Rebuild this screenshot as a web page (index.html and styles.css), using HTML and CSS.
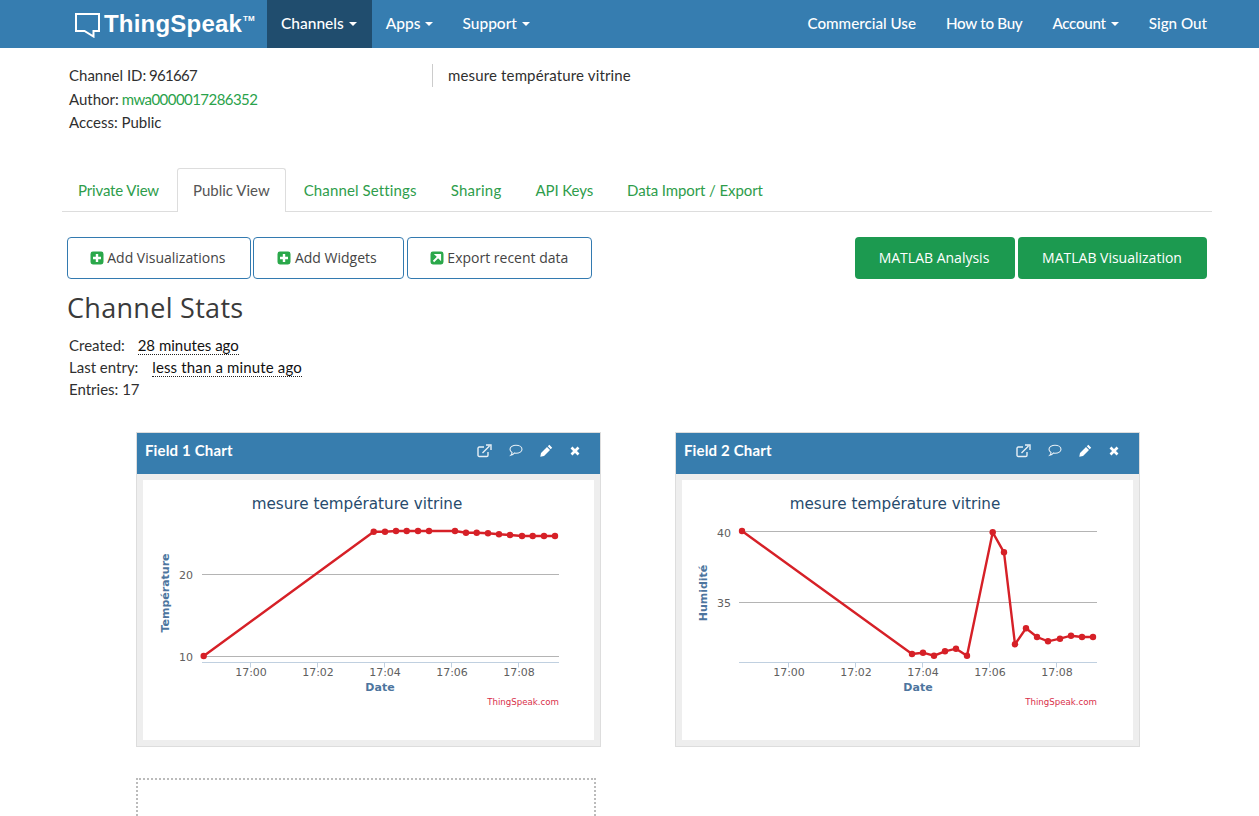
FILE: index.html
```html
<!DOCTYPE html>
<html lang="en">
<head>
<meta charset="utf-8">
<title>ThingSpeak channel</title>
<link rel="stylesheet" href="styles.css">
</head>
<body>
<nav class="navbar">
  <a class="brand">
    <svg class="brand-icon" width="26" height="26" viewBox="0 0 26 26"><path d="M1 2H24V19H18.500V24.500L9.500 19H1Z" fill="none" stroke="#fff" stroke-width="2"/></svg>
    <span class="brand-name">ThingSpeak</span><span class="brand-tm">TM</span>
  </a>
  <ul class="nav-left">
    <li class="nav-item active">Channels <i class="caret"></i></li>
    <li class="nav-item">Apps <i class="caret"></i></li>
    <li class="nav-item">Support <i class="caret"></i></li>
  </ul>
  <ul class="nav-right">
    <li class="nav-item">Commercial Use</li>
    <li class="nav-item tight">How to Buy</li>
    <li class="nav-item tight">Account <i class="caret"></i></li>
    <li class="nav-item">Sign Out</li>
  </ul>
</nav>

<main class="container">
  <section class="info">
    <div class="info-left">
      <div>Channel ID: <span class="num">961667</span></div>
      <div>Author: <a class="link">mwa0000017286352</a></div>
      <div>Access: Public</div>
    </div>
    <div class="info-desc">mesure température vitrine</div>
  </section>

  <ul class="tabs">
    <li class="tab tab-narrow">Private View</li>
    <li class="tab active">Public View</li>
    <li class="tab tab-wide">Channel Settings</li>
    <li class="tab tab-wider">Sharing</li>
    <li class="tab tab-slim">API Keys</li>
    <li class="tab tab-slim">Data Import / Export</li>
  </ul>

  <div class="toolbar">
    <div class="btn-group">
      <button class="btn btn-outline btn-vis"><svg class="ico" viewBox="0 0 14 14"><rect x=".5" width="13" height="13" y=".5" rx="2.400" fill="#2aa84a"/><path d="M7 3v8M3 7h8" stroke="#fff" stroke-width="2.400"/></svg> Add Visualizations</button>
      <button class="btn btn-outline btn-wid"><svg class="ico" viewBox="0 0 14 14"><rect x=".5" width="13" height="13" y=".5" rx="2.400" fill="#2aa84a"/><path d="M7 3v8M3 7h8" stroke="#fff" stroke-width="2.400"/></svg> Add Widgets</button>
      <button class="btn btn-outline btn-exp"><svg class="ico" viewBox="0 0 14 14"><rect x=".5" width="13" height="13" y=".5" rx="2.400" fill="#2aa84a"/><path d="M3.500 10.500L8 6M6 3.800H10.200V8Z" stroke="#fff" stroke-width="1.800" fill="#fff"/></svg> Export recent data</button>
    </div>
    <div class="btn-group">
      <button class="btn btn-green btn-ana">MATLAB Analysis</button>
      <button class="btn btn-green btn-viz">MATLAB Visualization</button>
    </div>
  </div>

  <h1 class="stats-title">Channel Stats</h1>
  <div class="stats">
    <div>Created: <abbr class="time first">28 minutes ago</abbr></div>
    <div>Last entry: <abbr class="time wide">less than a minute ago</abbr></div>
    <div>Entries: 17</div>
  </div>

  <section class="cards">
    <article class="card">
      <header class="card-head">
        <span class="card-title">Field 1 Chart</span>
        <span class="card-icons">
          <svg width="15" height="14" viewBox="0 0 15 14"><path d="M11 8v3.200a1.300 1.300 0 0 1-1.300 1.300H2.300A1.300 1.300 0 0 1 1 11.200V4.300A1.300 1.300 0 0 1 2.300 3H7M5.500 9L12.500 2M9 1h5v5" fill="none" stroke="#e8f0f6" stroke-width="1.400"/></svg>
          <svg width="14" height="13" viewBox="0 0 14 13"><path d="M7 1.200c3.300 0 6 1.700 6 4s-2.700 4-6 4c-.6 0-1.100 0-1.600-.2C4.500 10.200 3.300 11 1.800 11.300 2.700 10.400 3 9.500 3 8.400 1.800 7.700 1 6.500 1 5.200c0-2.300 2.700-4 6-4Z" fill="none" stroke="#e8f0f6" stroke-width="1.100"/></svg>
          <svg width="13" height="13" viewBox="0 0 13 13"><path d="M9.300.8l2.900 2.900-1.500 1.500-2.900-2.900ZM7 3l3 3-6 6-3.700.8.700-3.800Z" fill="#fff"/></svg>
          <svg width="10" height="10" viewBox="0 0 10 10"><path d="M1.500 1.500l7 7M8.500 1.500l-7 7" stroke="#fff" stroke-width="2.700"/></svg>
        </span>
      </header>
      <div class="card-body">
        <svg class="chart" width="451" height="260" viewBox="0 0 451 260">
          <text class="c-title" x="214" y="29" text-anchor="middle">mesure température vitrine</text>
          <path class="grid" d="M59 94.500H416M59 176.500H416"/>
          <path class="axis" d="M59 182.500H416M107.500 182.500v5M174.500 182.500v5M241.500 182.500v5M308.500 182.500v5M375.500 182.500v5"/>
          <text class="c-label" x="50" y="99" text-anchor="end">20</text>
          <text class="c-label" x="50" y="181" text-anchor="end">10</text>
          <text class="c-label" x="108" y="196" text-anchor="middle">17:00</text>
          <text class="c-label" x="175" y="196" text-anchor="middle">17:02</text>
          <text class="c-label" x="242" y="196" text-anchor="middle">17:04</text>
          <text class="c-label" x="309" y="196" text-anchor="middle">17:06</text>
          <text class="c-label" x="376" y="196" text-anchor="middle">17:08</text>
          <text class="c-axis" x="237" y="211" text-anchor="middle">Date</text>
          <text class="c-axis" transform="translate(26 113) rotate(-90)" text-anchor="middle">Température</text>
          <text class="c-credit" x="416" y="225" text-anchor="end">ThingSpeak.com</text>
          <polyline class="line" points="60.700,176 230.700,51.700 242,51.700 253,51 263.700,51 275,51 286,51 312,51 323,52.700 333.700,52.700 345,53.300 356,54.300 367,55 379,56 389.700,56 401,56 412,56"/>
          <g class="dots"><circle cx="60.700" cy="176" r="3.200"/><circle cx="230.700" cy="51.700" r="3.200"/><circle cx="242" cy="51.700" r="3.200"/><circle cx="253" cy="51" r="3.200"/><circle cx="263.700" cy="51" r="3.200"/><circle cx="275" cy="51" r="3.200"/><circle cx="286" cy="51" r="3.200"/><circle cx="312" cy="51" r="3.200"/><circle cx="323" cy="52.700" r="3.200"/><circle cx="333.700" cy="52.700" r="3.200"/><circle cx="345" cy="53.300" r="3.200"/><circle cx="356" cy="54.300" r="3.200"/><circle cx="367" cy="55" r="3.200"/><circle cx="379" cy="56" r="3.200"/><circle cx="389.700" cy="56" r="3.200"/><circle cx="401" cy="56" r="3.200"/><circle cx="412" cy="56" r="3.200"/></g>
        </svg>
      </div>
    </article>

    <article class="card">
      <header class="card-head">
        <span class="card-title">Field 2 Chart</span>
        <span class="card-icons">
          <svg width="15" height="14" viewBox="0 0 15 14"><path d="M11 8v3.200a1.300 1.300 0 0 1-1.300 1.300H2.300A1.300 1.300 0 0 1 1 11.200V4.300A1.300 1.300 0 0 1 2.300 3H7M5.500 9L12.500 2M9 1h5v5" fill="none" stroke="#e8f0f6" stroke-width="1.400"/></svg>
          <svg width="14" height="13" viewBox="0 0 14 13"><path d="M7 1.200c3.300 0 6 1.700 6 4s-2.700 4-6 4c-.6 0-1.100 0-1.600-.2C4.500 10.200 3.300 11 1.800 11.300 2.700 10.400 3 9.500 3 8.400 1.800 7.700 1 6.500 1 5.200c0-2.300 2.700-4 6-4Z" fill="none" stroke="#e8f0f6" stroke-width="1.100"/></svg>
          <svg width="13" height="13" viewBox="0 0 13 13"><path d="M9.300.8l2.900 2.900-1.500 1.500-2.900-2.900ZM7 3l3 3-6 6-3.700.8.700-3.800Z" fill="#fff"/></svg>
          <svg width="10" height="10" viewBox="0 0 10 10"><path d="M1.500 1.500l7 7M8.500 1.500l-7 7" stroke="#fff" stroke-width="2.700"/></svg>
        </span>
      </header>
      <div class="card-body">
        <svg class="chart" width="451" height="260" viewBox="0 0 451 260">
          <text class="c-title" x="213" y="29" text-anchor="middle">mesure température vitrine</text>
          <path class="grid" d="M57 51.500H415M57 122.500H415"/>
          <path class="axis" d="M57 182.500H415M106.500 182.500v5M173.500 182.500v5M240.500 182.500v5M307.500 182.500v5M374.500 182.500v5"/>
          <text class="c-label" x="49" y="57" text-anchor="end">40</text>
          <text class="c-label" x="49" y="127" text-anchor="end">35</text>
          <text class="c-label" x="107" y="196" text-anchor="middle">17:00</text>
          <text class="c-label" x="174" y="196" text-anchor="middle">17:02</text>
          <text class="c-label" x="241" y="196" text-anchor="middle">17:04</text>
          <text class="c-label" x="308" y="196" text-anchor="middle">17:06</text>
          <text class="c-label" x="375" y="196" text-anchor="middle">17:08</text>
          <text class="c-axis" x="236" y="211" text-anchor="middle">Date</text>
          <text class="c-axis" transform="translate(25 113) rotate(-90)" text-anchor="middle">Humidité</text>
          <text class="c-credit" x="415" y="225" text-anchor="end">ThingSpeak.com</text>
          <polyline class="line" points="60,51 230,174 241,172.700 252,175.700 263,171.300 274,168.700 285,175.700 310.700,52.300 322,72.300 333,164.300 344,148.300 355,157 366,161.300 378,158.700 389,155.700 400,157 411,157"/>
          <g class="dots"><circle cx="60" cy="51" r="3.200"/><circle cx="230" cy="174" r="3.200"/><circle cx="241" cy="172.700" r="3.200"/><circle cx="252" cy="175.700" r="3.200"/><circle cx="263" cy="171.300" r="3.200"/><circle cx="274" cy="168.700" r="3.200"/><circle cx="285" cy="175.700" r="3.200"/><circle cx="310.700" cy="52.300" r="3.200"/><circle cx="322" cy="72.300" r="3.200"/><circle cx="333" cy="164.300" r="3.200"/><circle cx="344" cy="148.300" r="3.200"/><circle cx="355" cy="157" r="3.200"/><circle cx="366" cy="161.300" r="3.200"/><circle cx="378" cy="158.700" r="3.200"/><circle cx="389" cy="155.700" r="3.200"/><circle cx="400" cy="157" r="3.200"/><circle cx="411" cy="157" r="3.200"/></g>
        </svg>
      </div>
    </article>
  </section>

  <div class="placeholder"></div>
</main>
</body>
</html>
```
FILE: styles.css
```css
* { box-sizing: border-box; }
html, body { margin: 0; height: 816px; overflow: hidden; }
body { font-family: "Lato", "Liberation Sans", sans-serif; font-size: 15px; color: #2f2f2f; background: #fff; }
ul { list-style: none; margin: 0; padding: 0; }

.navbar { display: flex; align-items: stretch; height: 48px; background: #367db0; color: #fff; padding-left: 75px; padding-right: 37px; }
.brand { display: flex; align-items: center; width: 192px; }
.brand-icon { margin-top: 1px; margin-right: 3px; }
.brand-name { font-family: "Liberation Sans", sans-serif; font-weight: 700; font-size: 24px; letter-spacing: .2px; }
.brand-tm { font-family: "Liberation Sans", sans-serif; font-weight: 700; font-size: 8px; margin-top: -11px; margin-left: 1px; }
.nav-left, .nav-right { display: flex; }
.nav-right { margin-left: auto; }
.nav-item { display: flex; align-items: center; gap: 5px; padding: 0 15px 2px 14px; font-size: 15.500px; font-weight: 500; }
.nav-right .nav-item { font-size: 15.200px; padding: 0 15px 2px; }
.nav-right .tight { letter-spacing: -.3px; }
.nav-item.active { background: #204d6e; }
.caret { display: inline-block; width: 0; height: 0; margin-top: 2px; border-top: 4px solid #fff; border-left: 4px solid transparent; border-right: 4px solid transparent; }

.container { padding: 0 47px 0 62px; }
.info { display: flex; align-items: flex-start; height: 120px; padding: 16px 0 0 7px; line-height: 23.500px; }
.info-left { width: 363px; }
.info-desc { height: 23px; border-left: 1px solid #ccc; padding-left: 15px; letter-spacing: .15px; }
.num { letter-spacing: -.7px; margin-left: -1px; }
.link { color: #2aa24b; letter-spacing: -.55px; margin-left: -1px; }

.tabs { display: flex; height: 44px; border-bottom: 1px solid #ddd; }
.tab { padding: 0 16px; margin-right: 2px; line-height: 44px; color: #2e9d4b; height: 44px; }
.tab-narrow { letter-spacing: -.15px; }
.tab-slim { letter-spacing: -.1px; }
.tab-wide { letter-spacing: .13px; }
.tab-wider { letter-spacing: .25px; }
.tab.active { color: #555; background: #fff; border: 1px solid #ddd; border-bottom: 0; border-radius: 3px 3px 0 0; line-height: 43px; height: 44px; padding: 0 15px; margin-right: 2px; }

.toolbar { display: flex; justify-content: space-between; padding: 25px 5px 0; }
.btn-group { display: flex; gap: 2px; }
.btn { height: 42px; border-radius: 4px; font-family: "Open Sans", sans-serif; font-size: 14px; cursor: pointer; padding: 0 0 2px; }
.btn-outline { background: #fff; border: 1px solid #337ab0; color: #444; }
.btn-green { background: #1c9a50; border: 0; color: #fff; }
.btn-vis { width: 184px; padding-right: 3px; }
.btn-wid { width: 151px; padding-right: 3px; }
.btn-exp { width: 185px; margin-left: 1px; padding-right: 1px; }
.btn-ana { width: 160px; padding-right: 2px; }
.btn-viz { width: 189px; margin-left: 1px; padding-right: 1px; }
.ico { width: 14px; height: 14px; vertical-align: -2px; }

.stats-title { margin: 13px 0 0 5px; font-family: "Open Sans", sans-serif; font-weight: 400; font-size: 27px; letter-spacing: .3px; line-height: 32px; color: #3a3a3a; }
.stats { margin: 10px 0 0 7px; line-height: 22px; }
.time { margin-left: 10px; color: #111; border-bottom: 1px dotted #222; }
.time.first { margin-left: 9px; }
.time.wide { letter-spacing: .15px; }

.cards { display: flex; gap: 74px; margin: 32px 0 0 74px; }
.card { width: 465px; height: 315px; background: #eee; border: 1px solid #ddd; }
.card-head { display: flex; align-items: center; justify-content: space-between; height: 41px; background: #377dae; color: #fff; padding: 0 20px 7px 8px; }
.card-title { font-family: "Lato", sans-serif; font-weight: 700; font-size: 15px; letter-spacing: .15px; }
.card-icons { display: flex; align-items: center; gap: 17px; padding-top: 1px; }
.card-body { padding: 6px; }
.chart { display: block; background: #fff; }
.grid { stroke: #b4b4b4; stroke-width: 1; fill: none; }
.axis { stroke: #c0d0e0; stroke-width: 1; fill: none; }
.line { fill: none; stroke: #d62027; stroke-width: 2.400; }
.dots { fill: #d62027; }
.c-title { font-family: "DejaVu Sans", sans-serif; font-size: 15.200px; fill: #274b6d; }
.c-label { font-family: "DejaVu Sans", sans-serif; font-size: 11px; fill: #606060; }
.c-axis { font-family: "DejaVu Sans", sans-serif; font-size: 11px; font-weight: 700; fill: #4d759e; }
.c-credit { font-family: "DejaVu Sans", sans-serif; font-size: 8.640px; fill: #d9304a; }

.placeholder { width: 460px; height: 38px; margin: 31px 0 0 74px; border: 2px dotted #bbb; border-bottom: 0; }
```
